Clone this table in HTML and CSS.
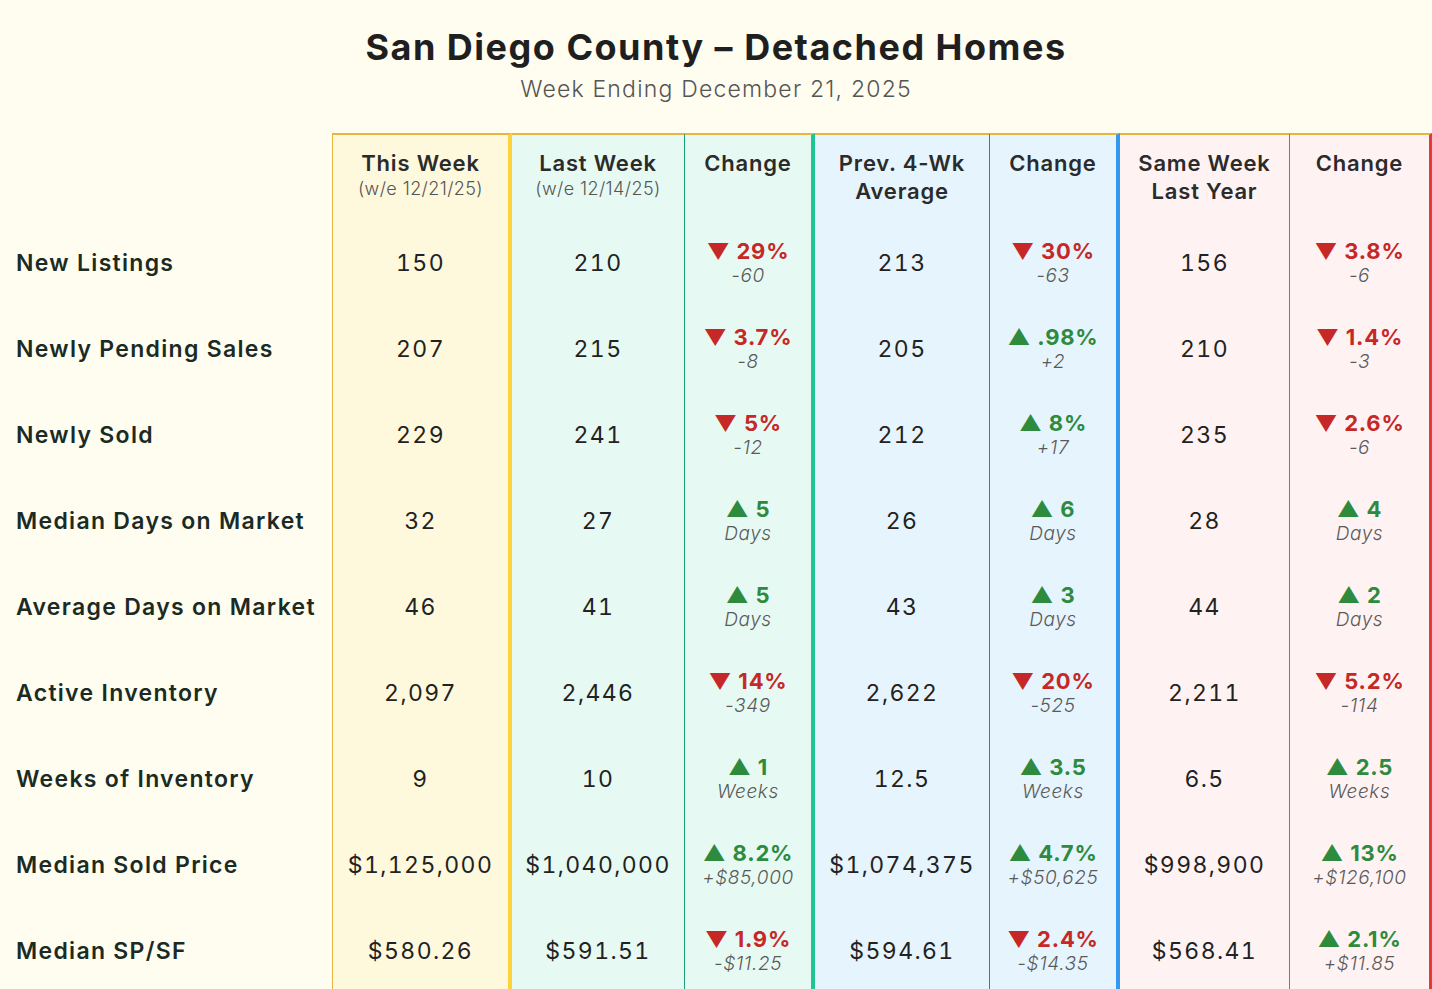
FILE: index.html
```html
<!DOCTYPE html>
<html lang="en">
<head>
<meta charset="utf-8">
<title>San Diego County – Detached Homes</title>
<link rel="stylesheet" href="styles.css">
</head>
<body>
<header class="top">
  <h1 class="title">San Diego County – Detached Homes</h1>
  <p class="subtitle">Week Ending December 21, 2025</p>
</header>
<div class="grid">
  <div class="row head">
    <div class="cell label"></div>
    <div class="cell tw"><span class="h">This Week</span><span class="hs">(w/e 12/21/25)</span></div>
    <div class="cell lw"><span class="h">Last Week</span><span class="hs">(w/e 12/14/25)</span></div>
    <div class="cell lwc"><span class="h">Change</span></div>
    <div class="cell pa"><span class="h">Prev. 4-Wk<br>Average</span></div>
    <div class="cell pac"><span class="h">Change</span></div>
    <div class="cell ly"><span class="h">Same Week<br>Last Year</span></div>
    <div class="cell lyc"><span class="h">Change</span></div>
  </div>

  <div class="row">
    <div class="cell label">New Listings</div>
    <div class="cell tw val">150</div>
    <div class="cell lw val">210</div>
    <div class="cell lwc chg"><span class="pct dn">▼ 29%</span><span class="sub">-60</span></div>
    <div class="cell pa val">213</div>
    <div class="cell pac chg"><span class="pct dn">▼ 30%</span><span class="sub">-63</span></div>
    <div class="cell ly val">156</div>
    <div class="cell lyc chg"><span class="pct dn">▼ 3.8%</span><span class="sub">-6</span></div>
  </div>

  <div class="row">
    <div class="cell label">Newly Pending Sales</div>
    <div class="cell tw val">207</div>
    <div class="cell lw val">215</div>
    <div class="cell lwc chg"><span class="pct dn">▼ 3.7%</span><span class="sub">-8</span></div>
    <div class="cell pa val">205</div>
    <div class="cell pac chg"><span class="pct up">▲ .98%</span><span class="sub">+2</span></div>
    <div class="cell ly val">210</div>
    <div class="cell lyc chg"><span class="pct dn">▼ 1.4%</span><span class="sub">-3</span></div>
  </div>

  <div class="row">
    <div class="cell label">Newly Sold</div>
    <div class="cell tw val">229</div>
    <div class="cell lw val">241</div>
    <div class="cell lwc chg"><span class="pct dn">▼ 5%</span><span class="sub">-12</span></div>
    <div class="cell pa val">212</div>
    <div class="cell pac chg"><span class="pct up">▲ 8%</span><span class="sub">+17</span></div>
    <div class="cell ly val">235</div>
    <div class="cell lyc chg"><span class="pct dn">▼ 2.6%</span><span class="sub">-6</span></div>
  </div>

  <div class="row">
    <div class="cell label">Median Days on Market</div>
    <div class="cell tw val">32</div>
    <div class="cell lw val">27</div>
    <div class="cell lwc chg"><span class="pct up">▲ 5</span><span class="sub">Days</span></div>
    <div class="cell pa val">26</div>
    <div class="cell pac chg"><span class="pct up">▲ 6</span><span class="sub">Days</span></div>
    <div class="cell ly val">28</div>
    <div class="cell lyc chg"><span class="pct up">▲ 4</span><span class="sub">Days</span></div>
  </div>

  <div class="row">
    <div class="cell label">Average Days on Market</div>
    <div class="cell tw val">46</div>
    <div class="cell lw val">41</div>
    <div class="cell lwc chg"><span class="pct up">▲ 5</span><span class="sub">Days</span></div>
    <div class="cell pa val">43</div>
    <div class="cell pac chg"><span class="pct up">▲ 3</span><span class="sub">Days</span></div>
    <div class="cell ly val">44</div>
    <div class="cell lyc chg"><span class="pct up">▲ 2</span><span class="sub">Days</span></div>
  </div>

  <div class="row">
    <div class="cell label">Active Inventory</div>
    <div class="cell tw val">2,097</div>
    <div class="cell lw val">2,446</div>
    <div class="cell lwc chg"><span class="pct dn">▼ 14%</span><span class="sub">-349</span></div>
    <div class="cell pa val">2,622</div>
    <div class="cell pac chg"><span class="pct dn">▼ 20%</span><span class="sub">-525</span></div>
    <div class="cell ly val">2,211</div>
    <div class="cell lyc chg"><span class="pct dn">▼ 5.2%</span><span class="sub">-114</span></div>
  </div>

  <div class="row">
    <div class="cell label">Weeks of Inventory</div>
    <div class="cell tw val">9</div>
    <div class="cell lw val">10</div>
    <div class="cell lwc chg"><span class="pct up">▲ 1</span><span class="sub">Weeks</span></div>
    <div class="cell pa val">12.5</div>
    <div class="cell pac chg"><span class="pct up">▲ 3.5</span><span class="sub">Weeks</span></div>
    <div class="cell ly val">6.5</div>
    <div class="cell lyc chg"><span class="pct up">▲ 2.5</span><span class="sub">Weeks</span></div>
  </div>

  <div class="row">
    <div class="cell label">Median Sold Price</div>
    <div class="cell tw val">$1,125,000</div>
    <div class="cell lw val">$1,040,000</div>
    <div class="cell lwc chg"><span class="pct up">▲ 8.2%</span><span class="sub">+$85,000</span></div>
    <div class="cell pa val">$1,074,375</div>
    <div class="cell pac chg"><span class="pct up">▲ 4.7%</span><span class="sub">+$50,625</span></div>
    <div class="cell ly val">$998,900</div>
    <div class="cell lyc chg"><span class="pct up">▲ 13%</span><span class="sub">+$126,100</span></div>
  </div>

  <div class="row">
    <div class="cell label">Median SP/SF</div>
    <div class="cell tw val">$580.26</div>
    <div class="cell lw val">$591.51</div>
    <div class="cell lwc chg"><span class="pct dn">▼ 1.9%</span><span class="sub">-$11.25</span></div>
    <div class="cell pa val">$594.61</div>
    <div class="cell pac chg"><span class="pct dn">▼ 2.4%</span><span class="sub">-$14.35</span></div>
    <div class="cell ly val">$568.41</div>
    <div class="cell lyc chg"><span class="pct up">▲ 2.1%</span><span class="sub">+$11.85</span></div>
  </div>
</div>
</body>
</html>
```

FILE: styles.css
```css
html, body {
  margin: 0;
  padding: 0;
  background: #fffdf0;
  font-family: Inter, "Open Sans", "Liberation Sans", sans-serif;
  color: #222;
}

.top {
  text-align: center;
  padding-top: 27px;
  padding-bottom: 30px;
}

.title {
  margin: 0;
  font-size: 36px;
  line-height: 40px;
  font-weight: 700;
  letter-spacing: 1.5px;
  color: #1f1f1f;
}

.subtitle {
  margin: 8px 0 0;
  font-size: 23px;
  line-height: 28px;
  font-weight: 300;
  letter-spacing: 1.2px;
  color: #555;
}

.grid {
  display: grid;
  grid-template-columns: 332px 180px 172px 131px 174px 131px 169px 143px;
  grid-template-rows: 87px;
  grid-auto-rows: 86px;
}

.row {
  display: contents;
}

.cell {
  box-sizing: border-box;
  display: flex;
  flex-direction: column;
  align-items: center;
  justify-content: center;
  text-align: center;
  white-space: nowrap;
}

.head .cell {
  justify-content: flex-start;
  padding-top: 14px;
  border-top: 2px solid #e6b640;
}

.head .cell.label {
  border-top: none;
}

.cell.label {
  align-items: flex-start;
  padding-left: 16px;
  text-align: left;
  font-size: 23px;
  font-weight: 600;
  letter-spacing: 1.3px;
  color: #1b2b24;
}

.h {
  font-size: 22px;
  line-height: 28px;
  font-weight: 600;
  letter-spacing: 0.8px;
  color: #2b2b2b;
}

.hs {
  font-size: 18px;
  line-height: 24px;
  font-weight: 300;
  letter-spacing: 0.4px;
  color: #555;
}

.tw {
  background: #fef8dc;
  border-left: 1px solid #e6b640;
  border-right: 4px solid #fdd23a;
}

.lw {
  background: #e6faf3;
}

.lwc {
  background: #e6faf3;
  border-left: 1px solid #1a9e78;
  border-right: 4px solid #20c593;
}

.pa {
  background: #e6f4fd;
}

.pac {
  background: #e6f4fd;
  border-left: 1px solid #2b7bd1;
  border-right: 4px solid #3399ee;
}

.ly {
  background: #fef3f2;
}

.lyc {
  background: #fef3f2;
  border-left: 1px solid #e05050;
  border-right: 3px solid #e53935;
}

.val {
  font-size: 23px;
  font-weight: 400;
  font-variant-numeric: tabular-nums;
  letter-spacing: 1.4px;
  color: #222;
}

.pct {
  font-size: 22px;
  line-height: 25px;
  font-weight: 700;
  letter-spacing: 0.8px;
}

.pct.dn {
  color: #c62828;
}

.pct.up {
  color: #2e8b3e;
}

.sub {
  font-size: 19px;
  line-height: 24px;
  font-style: italic;
  font-weight: 300;
  letter-spacing: 0.6px;
  color: #5a5a5a;
}
```
